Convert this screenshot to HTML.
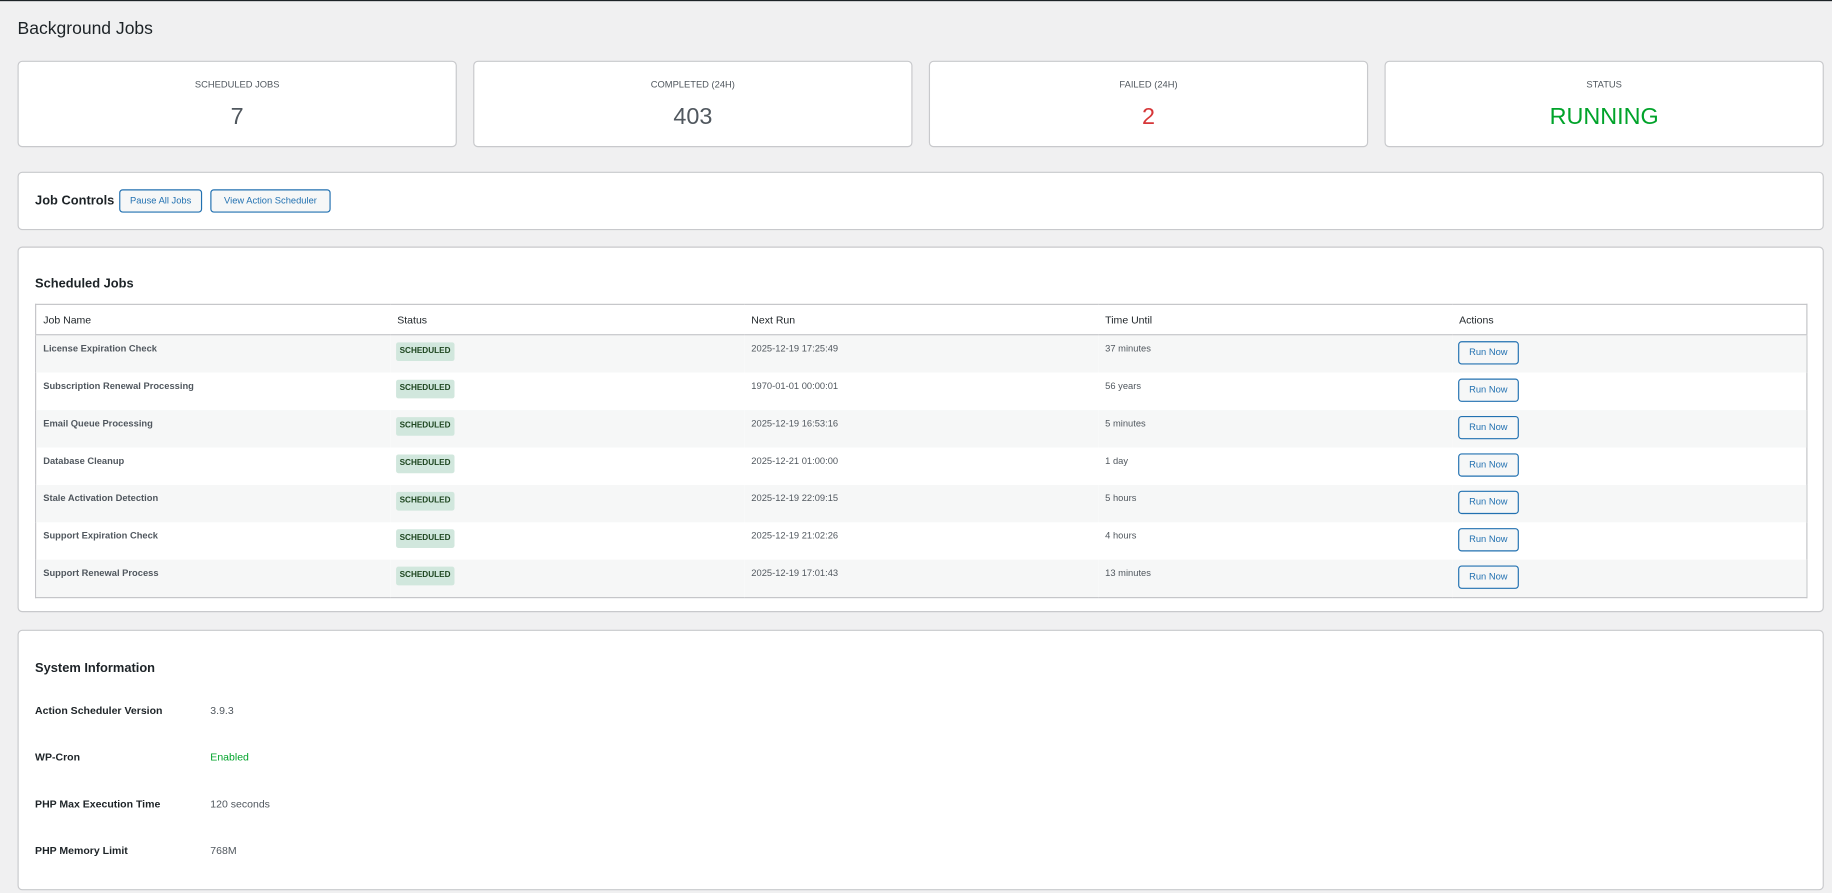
<!DOCTYPE html>
<html><head><meta charset="utf-8"><style>
html,body{margin:0;padding:0;width:1832px;height:893px;overflow:hidden;background:#f0f0f1;}
#w{position:absolute;left:0;top:0;width:1568px;height:764px;transform:scale(1.16837);transform-origin:0 0;font-family:"Liberation Sans",sans-serif;color:#1d2327;border-top:1px solid #1d2327;box-sizing:border-box;}
.a{position:absolute;}
.card{position:absolute;background:#fff;border:1px solid #c8c9cc;border-radius:4px;box-sizing:border-box;}
.lbl{position:absolute;left:0;right:0;text-align:center;font-size:8px;color:#50575e;top:15px;}
.num{position:absolute;left:0;right:0;text-align:center;font-size:20px;color:#50575e;top:36px;}
.btn{position:absolute;border:1px solid #2271b1;color:#2271b1;background:#f6f7f7;border-radius:3px;font-size:8px;box-sizing:border-box;text-align:center;line-height:18px;height:20px;}
h3{position:absolute;margin:0;font-size:11px;font-weight:bold;}
table{position:absolute;left:14px;top:48px;width:1517px;border-collapse:collapse;border:1px solid #c3c4c7;font-size:8px;}
th{text-align:left;font-weight:normal;font-size:9px;height:25px;padding:0 0 0 6px;border-bottom:1px solid #c3c4c7;width:303px;}
td{height:32px;padding:0 0 0 6px;vertical-align:top;position:relative;color:#50575e;}
td span.t{position:absolute;top:7px;}
tr.s td{background:#f6f7f7;}
td b{position:absolute;top:7px;font-size:8px;color:#50575e;}
.bd{position:absolute;left:5px;top:6px;background:#d1e7dd;color:#1e4620;font-size:7px;font-weight:bold;padding:0 3px;height:16px;line-height:16px;border-radius:2px;}
.rn{position:absolute;left:5px;top:5px;width:52px;height:20px;line-height:18px;border:1px solid #2271b1;color:#2271b1;background:#f6f7f7;border-radius:3px;text-align:center;font-size:8px;box-sizing:border-box;}
.k{position:absolute;left:14px;font-size:9px;font-weight:bold;}
.v{position:absolute;left:164px;font-size:9px;color:#50575e;}
</style></head><body><div id="w">
<div class="a" style="left:15px;top:15px;font-size:15px;">Background Jobs</div>

<div class="card" style="left:15px;top:51px;width:376px;height:74px;"><div class="lbl">SCHEDULED JOBS</div><div class="num">7</div></div>
<div class="card" style="left:405px;top:51px;width:376px;height:74px;"><div class="lbl">COMPLETED (24H)</div><div class="num">403</div></div>
<div class="card" style="left:795px;top:51px;width:376px;height:74px;"><div class="lbl">FAILED (24H)</div><div class="num" style="color:#d63638">2</div></div>
<div class="card" style="left:1185px;top:51px;width:376px;height:74px;"><div class="lbl">STATUS</div><div class="num" style="color:#00a32a">RUNNING</div></div>

<div class="card" style="left:15px;top:146px;width:1546px;height:50px;">
<h3 style="left:14px;top:18px;">Job Controls</h3>
<div class="btn" style="left:86px;top:14px;width:71px;">Pause All Jobs</div>
<div class="btn" style="left:164px;top:14px;width:103px;">View Action Scheduler</div>
</div>

<div class="card" style="left:15px;top:210px;width:1546px;height:313px;">
<h3 style="left:14px;top:25px;">Scheduled Jobs</h3>
<table>
<tr><th>Job Name</th><th>Status</th><th>Next Run</th><th>Time Until</th><th>Actions</th></tr>
<tr class="s"><td><b>License Expiration Check</b></td><td><span class="bd">SCHEDULED</span></td><td><span class="t">2025-12-19 17:25:49</span></td><td><span class="t">37 minutes</span></td><td><span class="rn">Run Now</span></td></tr>
<tr><td><b>Subscription Renewal Processing</b></td><td><span class="bd">SCHEDULED</span></td><td><span class="t">1970-01-01 00:00:01</span></td><td><span class="t">56 years</span></td><td><span class="rn">Run Now</span></td></tr>
<tr class="s"><td><b>Email Queue Processing</b></td><td><span class="bd">SCHEDULED</span></td><td><span class="t">2025-12-19 16:53:16</span></td><td><span class="t">5 minutes</span></td><td><span class="rn">Run Now</span></td></tr>
<tr><td><b>Database Cleanup</b></td><td><span class="bd">SCHEDULED</span></td><td><span class="t">2025-12-21 01:00:00</span></td><td><span class="t">1 day</span></td><td><span class="rn">Run Now</span></td></tr>
<tr class="s"><td><b>Stale Activation Detection</b></td><td><span class="bd">SCHEDULED</span></td><td><span class="t">2025-12-19 22:09:15</span></td><td><span class="t">5 hours</span></td><td><span class="rn">Run Now</span></td></tr>
<tr><td><b>Support Expiration Check</b></td><td><span class="bd">SCHEDULED</span></td><td><span class="t">2025-12-19 21:02:26</span></td><td><span class="t">4 hours</span></td><td><span class="rn">Run Now</span></td></tr>
<tr class="s"><td><b>Support Renewal Process</b></td><td><span class="bd">SCHEDULED</span></td><td><span class="t">2025-12-19 17:01:43</span></td><td><span class="t">13 minutes</span></td><td><span class="rn">Run Now</span></td></tr>
</table>
</div>

<div class="card" style="left:15px;top:538px;width:1546px;height:223px;">
<h3 style="left:14px;top:26px;">System Information</h3>
<div class="k" style="top:63px;">Action Scheduler Version</div><div class="v" style="top:63px;">3.9.3</div>
<div class="k" style="top:103px;">WP-Cron</div><div class="v" style="top:103px;color:#00a32a;">Enabled</div>
<div class="k" style="top:143px;">PHP Max Execution Time</div><div class="v" style="top:143px;">120 seconds</div>
<div class="k" style="top:183px;">PHP Memory Limit</div><div class="v" style="top:183px;">768M</div>
</div>
</div></body></html>
